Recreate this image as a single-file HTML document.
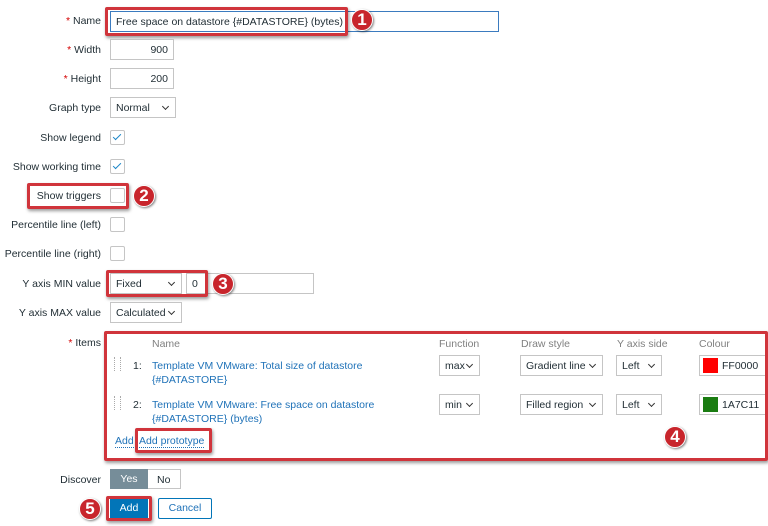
<!DOCTYPE html>
<html><head><meta charset="utf-8"><style>
body{margin:0;width:768px;height:526px;background:#fff;font-family:"Liberation Sans",sans-serif;font-size:10.5px;color:#1f2c33;position:relative;overflow:hidden}
.a{position:absolute}
.lbl{position:absolute;right:667px;text-align:right;white-space:nowrap}
.req{color:#d40000}
.in{position:absolute;border:1px solid #c5c5c5;background:#fff;box-sizing:border-box;height:21px;line-height:20px;padding:0 5px;white-space:nowrap}
.sel::after{content:"";position:absolute;right:7px;top:6px;width:4px;height:4px;border-right:1.5px solid #333;border-bottom:1.5px solid #333;transform:rotate(45deg)}
.cb{position:absolute;width:13px;height:13px;border:1px solid #c5c5c5;border-radius:2px;background:#fff}
.cb.on::after{content:"";position:absolute;left:4px;top:1px;width:3px;height:7px;border-right:1.5px solid #1e87c8;border-bottom:1.5px solid #1e87c8;transform:rotate(45deg)}
.rb{position:absolute;border:3px solid #d0343b;box-sizing:border-box;border-radius:2px;box-shadow:1px 2px 3px rgba(0,0,0,.4)}
.bd{position:absolute;width:20px;height:20px;border-radius:50%;background:#c8252c;color:#fff;font-weight:bold;font-size:17px;line-height:20px;text-align:center;box-shadow:1px 1px 2px rgba(0,0,0,.5);border:1px solid #fff}
.lnk{color:#1f72b8}
.hd{color:#808080}
</style></head><body>
<div class="lbl" style="top:15px"><span class="req">*</span> Name</div>
<div class="in" style="left:110px;top:11px;width:389px;border-color:#3b7bbf">Free space on datastore {#DATASTORE} (bytes)</div>
<div class="rb" style="left:105px;top:7px;width:243px;height:29px"></div>
<div class="bd" style="left:351px;top:9px">1</div>

<div class="lbl" style="top:44px"><span class="req">*</span> Width</div>
<div class="in" style="left:110px;top:39px;width:64px;text-align:right">900</div>
<div class="lbl" style="top:73px"><span class="req">*</span> Height</div>
<div class="in" style="left:110px;top:68px;width:64px;text-align:right">200</div>
<div class="lbl" style="top:102px">Graph type</div>
<div class="in sel" style="left:110px;top:97px;width:66px">Normal</div>
<div class="lbl" style="top:132px">Show legend</div>
<div class="cb on" style="left:110px;top:130px"></div>
<div class="lbl" style="top:161px">Show working time</div>
<div class="cb on" style="left:110px;top:159px"></div>
<div class="lbl" style="top:190px">Show triggers</div>
<div class="cb" style="left:110px;top:188px"></div>
<div class="rb" style="left:27px;top:183px;width:102px;height:26px"></div>
<div class="bd" style="left:133px;top:185px">2</div>
<div class="lbl" style="top:219px">Percentile line (left)</div>
<div class="cb" style="left:110px;top:217px"></div>
<div class="lbl" style="top:248px">Percentile line (right)</div>
<div class="cb" style="left:110px;top:246px"></div>
<div class="lbl" style="top:278px">Y axis MIN value</div>
<div class="in sel" style="left:110px;top:273px;width:72px">Fixed</div>
<div class="in" style="left:186px;top:273px;width:128px">0</div>
<div class="rb" style="left:106px;top:270px;width:102px;height:27px"></div>
<div class="bd" style="left:212px;top:273px">3</div>
<div class="lbl" style="top:307px">Y axis MAX value</div>
<div class="in sel" style="left:110px;top:302px;width:72px">Calculated</div>

<div class="lbl" style="top:337px"><span class="req">*</span> Items</div>
<div class="a hd" style="left:152px;top:338px">Name</div>
<div class="a hd" style="left:439px;top:338px">Function</div>
<div class="a hd" style="left:521px;top:338px">Draw style</div>
<div class="a hd" style="left:617px;top:338px">Y axis side</div>
<div class="a hd" style="left:699px;top:338px">Colour</div>
<div class="a" style="left:114px;top:357px;width:5px;height:14px;border-left:1px dotted #aaa;border-right:1px dotted #aaa"></div>
<div class="a" style="left:133px;top:360px">1:</div>
<div class="a lnk" style="left:152px;top:359px;line-height:14px">Template VM VMware: Total size of datastore<br>{#DATASTORE}</div>
<div class="in sel" style="left:439px;top:355px;width:41px">max</div>
<div class="in sel" style="left:520px;top:355px;width:83px">Gradient line</div>
<div class="in sel" style="left:616px;top:355px;width:46px">Left</div>
<div class="in" style="left:699px;top:355px;width:70px;padding-left:22px">FF0000</div>
<div class="a" style="left:703px;top:358px;width:15px;height:15px;background:#f00"></div>
<div class="a" style="left:114px;top:396px;width:5px;height:14px;border-left:1px dotted #aaa;border-right:1px dotted #aaa"></div>
<div class="a" style="left:133px;top:399px">2:</div>
<div class="a lnk" style="left:152px;top:398px;line-height:14px">Template VM VMware: Free space on datastore<br>{#DATASTORE} (bytes)</div>
<div class="in sel" style="left:439px;top:394px;width:41px">min</div>
<div class="in sel" style="left:520px;top:394px;width:83px">Filled region</div>
<div class="in sel" style="left:616px;top:394px;width:46px">Left</div>
<div class="in" style="left:699px;top:394px;width:70px;padding-left:22px">1A7C11</div>
<div class="a" style="left:703px;top:397px;width:15px;height:15px;background:#1a7c11"></div>
<div class="a lnk" style="left:115px;top:435px;border-bottom:1px dotted #1f72b8">Add</div>
<div class="a lnk" style="left:139px;top:435px;border-bottom:1px dotted #1f72b8">Add prototype</div>
<div class="rb" style="left:135px;top:428px;width:77px;height:25px"></div>
<div class="rb" style="left:104px;top:331px;width:664px;height:130px"></div>
<div class="bd" style="left:664px;top:426px">4</div>

<div class="lbl" style="top:474px">Discover</div>
<div class="a" style="left:110px;top:469px;width:71px;height:20px;border:1px solid #c5c5c5;box-sizing:border-box"></div>
<div class="a" style="left:110px;top:469px;width:38px;height:20px;background:#768d99;color:#fff;text-align:center;line-height:20px">Yes</div>
<div class="a" style="left:157px;top:474px">No</div>
<div class="a" style="left:110px;top:498px;width:38px;height:21px;background:#0275b8;color:#fff;text-align:center;line-height:21px">Add</div>
<div class="rb" style="left:106px;top:496px;width:46px;height:25px"></div>
<div class="a lnk" style="left:158px;top:498px;width:54px;height:21px;border:1px solid #0275b8;box-sizing:border-box;text-align:center;line-height:19px;border-radius:2px">Cancel</div>
<div class="bd" style="left:79px;top:498px">5</div>
</body></html>
